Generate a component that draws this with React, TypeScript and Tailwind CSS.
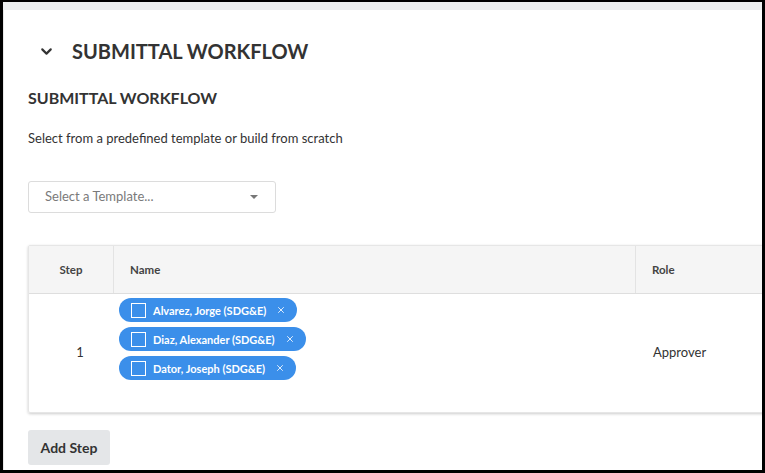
import { ChevronDown, X } from "lucide-react";

const approvers = [
  "Alvarez, Jorge (SDG&E)",
  "Diaz, Alexander (SDG&E)",
  "Dator, Joseph (SDG&E)",
];

function Chip({ label }: { label: string }) {
  return (
    <div className="flex h-[24px] w-fit items-center rounded-full bg-[#3b8fea] pl-3 pr-[11px] text-white">
      <span className="mr-[7px] h-[15px] w-[15px] border-[1.5px] border-white" />
      <span className="text-[11px] font-bold leading-none">{label}</span>
      <X className="ml-[10px] h-[10px] w-[10px]" strokeWidth={2} />
    </div>
  );
}

export default function App() {
  return (
    <div
      className="flex h-[473px] w-[765px] flex-col overflow-hidden border-t-2 border-r-[3px] border-b-[3px] border-l-[3px] border-black bg-white text-[#333]"
      style={{ fontFamily: "Lato, 'Open Sans', sans-serif" }}
    >
      <div className="h-[8px] shrink-0 bg-[#eceeef]" />
      <div className="flex min-h-0 flex-1 flex-col border-l border-[#e8e8e8] pl-[24px]">
        <div className="mt-[31px] flex items-center">
          <ChevronDown className="ml-[10px] h-[17px] w-[17px] text-[#333]" strokeWidth={3} />
          <h1 className="ml-[17px] text-[20px] font-bold leading-none">
            SUBMITTAL WORKFLOW
          </h1>
        </div>
        <h2 className="mt-[29px] text-[16px] font-bold leading-none">SUBMITTAL WORKFLOW</h2>
        <p className="mt-[26px] text-[13px] leading-none">
          Select from a predefined template or build from scratch
        </p>

        <div className="mt-[36px] flex h-[32px] w-[248px] items-center justify-between rounded-[3px] border border-[#dcdcdc] pl-4 pr-[17px]">
          <span className="text-[13px] text-[#7a7a7a]">Select a Template...</span>
          <span className="h-0 w-0 border-x-[4px] border-t-[4px] border-x-transparent border-t-[#777]" />
        </div>

        <div className="mt-[32px] w-[900px] rounded-[2px] border border-[#e6e6e6] shadow-[0_1px_3px_rgba(0,0,0,0.2)]">
          <div className="flex h-[48px] border-b border-[#dedede] bg-[#f5f5f5] text-[11.5px] font-bold text-[#444]">
            <div className="flex w-[85px] items-center justify-center border-r border-[#e3e3e3]">Step</div>
            <div className="flex w-[522px] items-center border-r border-[#e3e3e3] pl-[16px]">Name</div>
            <div className="flex flex-1 items-center pl-[16px]">Role</div>
          </div>
          <div className="flex h-[118px] text-[13px]">
            <div className="flex w-[85px] items-center justify-center pl-[17px]">1</div>
            <div className="flex w-[522px] flex-col gap-[5px] pl-[5px] pt-[4px]">
              {approvers.map((a) => (
                <Chip key={a} label={a} />
              ))}
            </div>
            <div className="flex flex-1 items-center pl-[17px]">Approver</div>
          </div>
        </div>

        <button className="mt-[17px] h-[35px] w-[82px] rounded-[3px] bg-[#e4e6e8] text-[14px] font-bold text-[#333]">
          Add Step
        </button>
      </div>
    </div>
  );
}
